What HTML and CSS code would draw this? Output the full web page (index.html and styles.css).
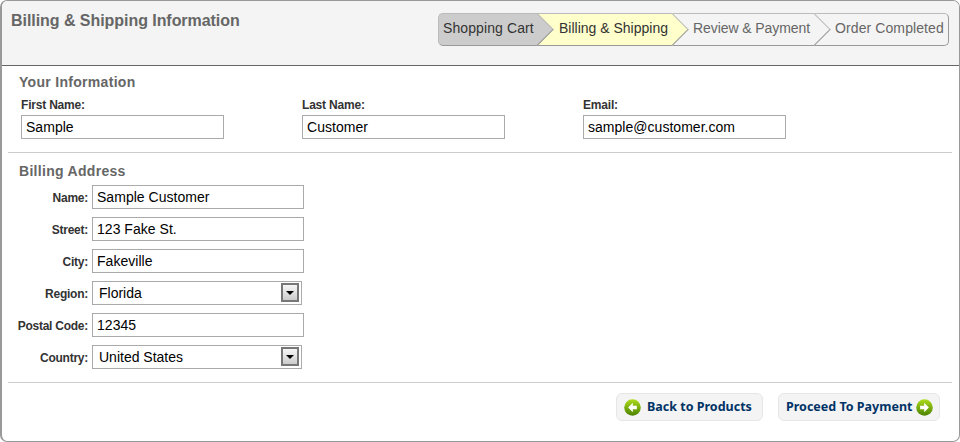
FILE: index.html
```html
<!DOCTYPE html>
<html lang="en">
<head>
  <meta charset="UTF-8" />
  <title>Billing &amp; Shipping Information</title>
  <link rel="stylesheet" href="styles.css">
</head>
<body>
  <div class="panel">
    <div class="panel-head">
      <h1>Billing &amp; Shipping Information</h1>
      <div class="steps">
        <div class="step step-done"><span>Shopping Cart</span></div>
        <div class="step step-now"><span>Billing &amp; Shipping</span></div>
        <div class="step step-next"><span>Review &amp; Payment</span></div>
        <div class="step step-last"><span>Order Completed</span></div>
      </div>
    </div>

    <div class="section section-info">
      <h2>Your Information</h2>
      <div class="info-row">
        <label class="info-field">First Name:<input type="text" value="Sample"></label>
        <label class="info-field">Last Name:<input type="text" value="Customer"></label>
        <label class="info-field">Email:<input type="text" value="sample@customer.com"></label>
      </div>
    </div>

    <div class="section section-billing">
      <h2>Billing Address</h2>
      <div class="address">
        <label>Name:</label><input type="text" value="Sample Customer">
        <label>Street:</label><input type="text" value="123 Fake St.">
        <label>City:</label><input type="text" value="Fakeville">
        <label>Region:</label>
        <div class="select-box">Florida<span class="select-btn"><i></i></span></div>
        <label>Postal Code:</label><input type="text" value="12345">
        <label>Country:</label>
        <div class="select-box">United States<span class="select-btn"><i></i></span></div>
      </div>
    </div>

    <div class="actions">
      <a class="btn btn-back" href="#">
        <svg width="17" height="17" viewBox="0 0 16 16">
          <defs><linearGradient id="g1" x1="0" y1="0" x2="0" y2="1"><stop offset="0" stop-color="#aedc1e"/><stop offset="1" stop-color="#4a8200"/></linearGradient></defs>
          <circle cx="8" cy="8" r="7.8" fill="url(#g1)"/>
          <path d="M8.3 3.6 3.9 8l4.4 4.4V9.7h3.8V6.3H8.3z" fill="#fff"/>
        </svg>
        <span class="btn-text">Back to Products</span>
      </a>
      <a class="btn btn-next" href="#">
        <span class="btn-text">Proceed To Payment</span>
        <svg width="17" height="17" viewBox="0 0 16 16">
          <defs><linearGradient id="g2" x1="0" y1="0" x2="0" y2="1"><stop offset="0" stop-color="#aedc1e"/><stop offset="1" stop-color="#4a8200"/></linearGradient></defs>
          <circle cx="8" cy="8" r="7.8" fill="url(#g2)"/>
          <path d="M7.7 3.6 12.1 8l-4.4 4.4V9.7H3.9V6.3h3.8z" fill="#fff"/>
        </svg>
      </a>
    </div>
  </div>
</body>
</html>
```
FILE: styles.css
```css
html, body {
  margin: 0;
  padding: 0;
}

body {
  font-family: "Liberation Sans", Arial, sans-serif;
  background-color: #fff;
  color: #000;
}

.panel {
  box-sizing: border-box;
  width: 960px;
  height: 442px;
  border: 1px solid #999;
  border-left-width: 2px;
  border-radius: 7px;
  overflow: hidden;
}

.panel-head {
  box-sizing: border-box;
  height: 65px;
  padding: 12px 10px 0 9px;
  background-color: #f4f4f4;
  border-bottom: 1px solid #666;
  display: flex;
  justify-content: space-between;
  align-items: flex-start;
}

h1 {
  margin: 0;
  font-size: 16px;
  line-height: 16px;
  letter-spacing: -0.05px;
  color: #666;
}

h2 {
  margin: 0;
  font-size: 14px;
  line-height: 16px;
  letter-spacing: 0.3px;
  color: #666;
}

/* breadcrumb arrows */
.steps {
  display: flex;
  height: 33px;
  font-size: 14px;
  line-height: 29px;
  color: #666;
}

.step {
  box-sizing: border-box;
  position: relative;
  height: 33px;
  border-top: 1px solid #bbb;
  border-bottom: 1px solid #999;
  white-space: nowrap;
}

.step span {
  position: relative;
  z-index: 3;
}

.step::after {
  content: "";
  position: absolute;
  top: 4px;
  right: -11px;
  width: 22px;
  height: 22px;
  transform: rotate(45deg);
  border-top: 1px solid #bbb;
  border-right: 1px solid #999;
  z-index: 2;
}

.step-done {
  width: 100px;
  padding-left: 4px;
  letter-spacing: 0.1px;
  background-color: #ccc;
  color: #333;
  border-radius: 5px 0 0 5px;
  border-left: 1px solid #bbb;
}

.step-done::after { background-color: #ccc; }

.step-now {
  width: 135px;
  padding-left: 21px;
  background-color: #ffffcc;
  color: #333;
}

.step-now::after { background-color: #ffffcc; }

.step-next {
  width: 142px;
  padding-left: 20px;
  letter-spacing: -0.08px;
}

.step-next::after { background-color: #f4f4f4; }

.step-last {
  width: 134px;
  padding-left: 20px;
  letter-spacing: 0.1px;
  border-right: 1px solid #999;
  border-radius: 0 5px 5px 0;
}

.step-last::after { display: none; }

.section {
  margin: 0 7px 0 6px;
  border-bottom: 1px solid #ccc;
}

.section-info {
  box-sizing: border-box;
  height: 87px;
  padding: 8px 0 0 11px;
}

.section-billing {
  box-sizing: border-box;
  height: 230px;
  padding: 10px 0 0 11px;
}

.info-row {
  display: flex;
  margin-top: 8px;
  padding-left: 2px;
}

.info-field {
  display: block;
  width: 281px;
  font-size: 12px;
  line-height: 14px;
  font-weight: bold;
  letter-spacing: -0.2px;
  color: #333;
}

input {
  box-sizing: border-box;
  display: block;
  width: 203px;
  height: 24px;
  margin: 3px 0 0;
  padding: 0 4px;
  border: 1px solid #aaa;
  font-family: "Liberation Sans", Arial, sans-serif;
  font-size: 14px;
  letter-spacing: 0.03px;
  color: #000;
  background-color: #fff;
  outline: none;
}

.address {
  display: grid;
  grid-template-columns: 71px 212px;
  column-gap: 4px;
  grid-auto-rows: 24px;
  row-gap: 8px;
  margin: 6px 0 0 -2px;
  align-items: center;
}

.address label {
  padding-top: 1px;
  font-size: 12px;
  font-weight: bold;
  letter-spacing: -0.25px;
  color: #333;
  text-align: right;
  white-space: nowrap;
}

.address input {
  width: 212px;
  margin: 0;
}

.select-box {
  box-sizing: border-box;
  position: relative;
  width: 210px;
  height: 24px;
  padding-left: 6px;
  border: 1px solid #aaa;
  font-size: 14px;
  line-height: 22px;
  background-color: #fff;
}

.select-btn {
  box-sizing: border-box;
  position: absolute;
  top: 1px;
  right: 2px;
  width: 18px;
  height: 19px;
  border: 2px solid #777;
  background: linear-gradient(to bottom, #f6f6f6, #ccc);
}

.select-btn i {
  position: absolute;
  top: 6px;
  left: 3px;
  border-style: solid;
  border-width: 4px 4px 0;
  border-color: #000 transparent transparent;
}

.actions {
  display: flex;
  justify-content: flex-end;
  gap: 15px;
  padding: 10px 19px 0 0;
}

.btn {
  box-sizing: border-box;
  display: flex;
  align-items: center;
  height: 28px;
  border: 1px solid #e6e6e6;
  border-radius: 6px;
  background-color: #f4f4f4;
  font-family: "Noto Sans", Verdana, sans-serif;
  font-size: 12.5px;
  font-weight: bold;
  color: #003366;
  text-decoration: none;
  white-space: nowrap;
}

.btn-text {
  padding-bottom: 2px;
}

.btn-back {
  width: 147px;
  gap: 6px;
  padding-left: 7px;
}

.btn-next {
  width: 162px;
  gap: 4px;
  padding-left: 7px;
}
```
